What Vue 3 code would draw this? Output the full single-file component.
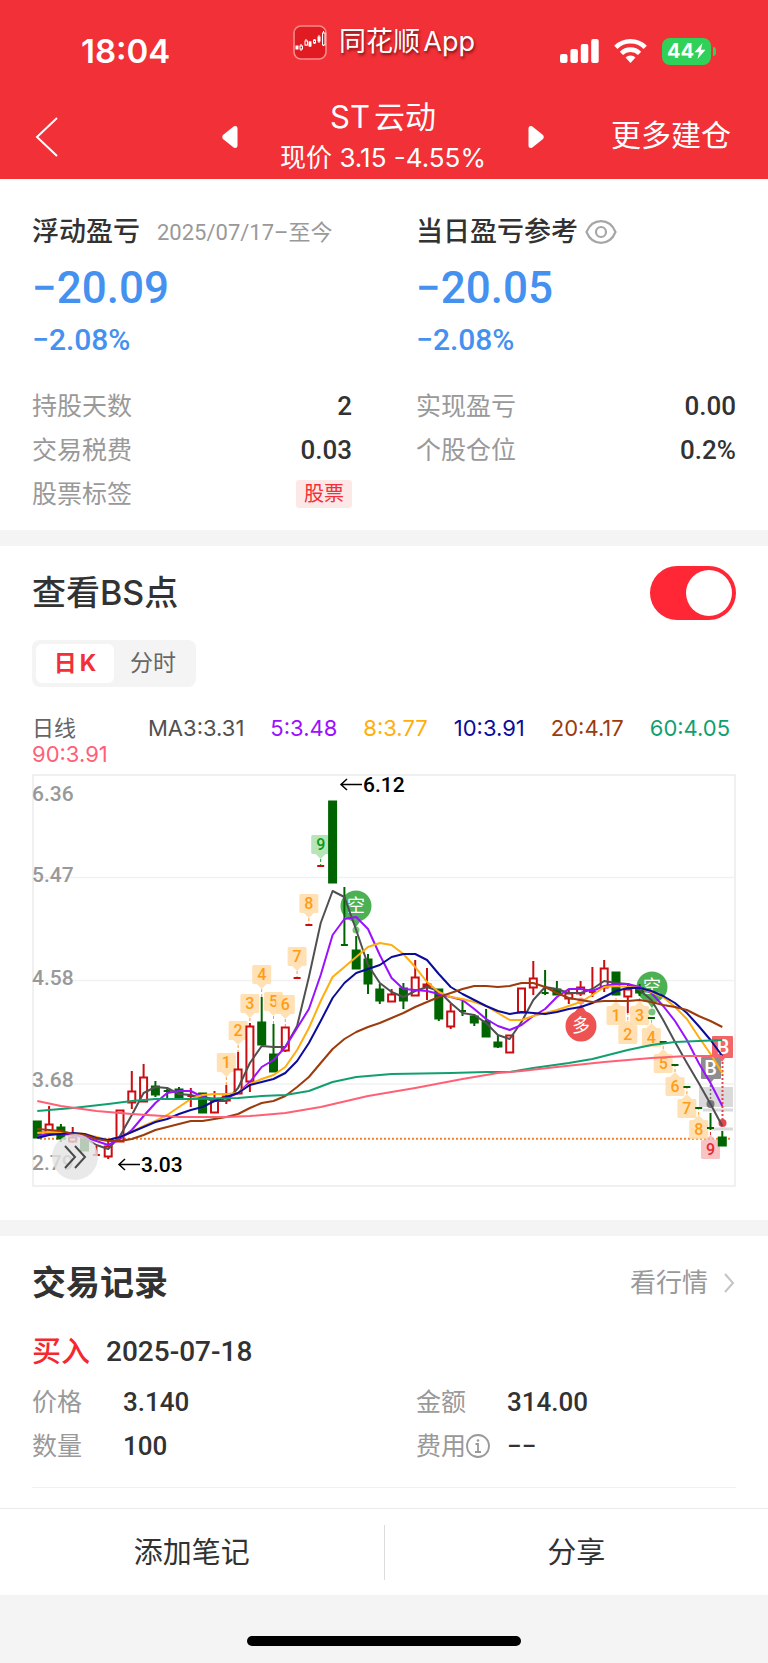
<script setup>
import { ref } from 'vue'

const bsVisible = ref(true)
const period = ref('day')

const summary = [
  {
    title: '浮动盈亏', range: '2025/07/17–至今', amount: '−20.09', percent: '−2.08%',
    rows: [
      { label: '持股天数', value: '2' },
      { label: '交易税费', value: '0.03' },
      { label: '股票标签', tag: '股票' }
    ]
  },
  {
    title: '当日盈亏参考', eye: true, amount: '−20.05', percent: '−2.08%',
    rows: [
      { label: '实现盈亏', value: '0.00' },
      { label: '个股仓位', value: '0.2%' }
    ]
  }
]

const legend = [
  { text: 'MA3:3.31', cls: 'ma3' },
  { text: '5:3.48', cls: 'ma5' },
  { text: '8:3.77', cls: 'ma8' },
  { text: '10:3.91', cls: 'ma10' },
  { text: '20:4.17', cls: 'ma20' },
  { text: '60:4.05', cls: 'ma60' },
  { text: '90:3.91', cls: 'ma90' }
]

const px = (i) => Math.round((37.3 + 11.81 * i) * 10) / 10

// colour, high, body top, body bottom, low
const candles = [
  ['g', 1121, 1121, 1138, 1138], ['r', 1106, 1124, 1134, 1136], ['g', 1124, 1127, 1139, 1142],
  ['r', 1127, 1137, 1142, 1143], ['g', 1139, 1139, 1151, 1151], ['r', 1146, 1155, 1155, 1155],
  ['r', 1140, 1146, 1157, 1159], ['r', 1110, 1110, 1142, 1142], ['r', 1071, 1091, 1103, 1109],
  ['r', 1064, 1077, 1102, 1102], ['g', 1081, 1086, 1095, 1097], ['g', 1088, 1091, 1091, 1099],
  ['g', 1087, 1089, 1098, 1098], ['r', 1088, 1096, 1096, 1107], ['g', 1093, 1093, 1113, 1113],
  ['r', 1091, 1100, 1113, 1113], ['r', 1085, 1096, 1101, 1104], ['r', 1052, 1069, 1094, 1094],
  ['r', 1023, 1026, 1082, 1092], ['g', 997, 1022, 1045, 1045], ['g', 1024, 1054, 1072, 1072],
  ['r', 1027, 1027, 1051, 1052], ['r', 978, 978, 978, 978], ['r', 925, 925, 925, 925],
  ['r', 866, 866, 866, 866], ['g', 801, 801, 883, 883], ['g', 887, 945, 945, 945],
  ['g', 936, 950, 969, 969], ['g', 954, 959, 984, 994], ['g', 984, 989, 1001, 1004],
  ['r', 989, 994, 1002, 1002], ['g', 983, 988, 1001, 1009], ['r', 960, 977, 996, 996],
  ['r', 968, 984, 987, 1000], ['g', 989, 989, 1019, 1021], ['r', 1004, 1011, 1027, 1029],
  ['g', 1001, 1011, 1011, 1016], ['g', 1014, 1016, 1023, 1026], ['g', 1009, 1021, 1037, 1037],
  ['g', 1035, 1042, 1047, 1048], ['r', 1035, 1035, 1053, 1053], ['r', 988, 988, 1013, 1013],
  ['r', 961, 978, 988, 995], ['g', 970, 993, 993, 995], ['g', 981, 989, 995, 995],
  ['r', 990, 993, 999, 1004], ['r', 981, 987, 994, 996], ['r', 967, 992, 992, 997],
  ['r', 960, 968, 988, 992], ['g', 972, 972, 995, 995], ['r', 985, 989, 997, 1013],
  ['g', 984, 988, 993, 996], ['g', 1018, 1018, 1018, 1018], ['g', 1042, 1042, 1042, 1042],
  ['g', 1065, 1065, 1065, 1065], ['g', 1087, 1087, 1087, 1087], ['g', 1108, 1108, 1108, 1108],
  ['g', 1113, 1128, 1128, 1130], ['g', 1131, 1137, 1146, 1146]
].map(([tone, high, top, bottom, low], i) => ({ tone, high, top, bottom, low, x: px(i) }))

const dense = (ys) => ys.map((y, i) => `${px(i)},${y}`).join(' ')
const sparse = (pairs) => pairs.map(([i, y]) => `${px(i)},${y}`).join(' ')

const averages = [
  { cls: 'ma3', points: dense([1132, 1133, 1133, 1134, 1138, 1145, 1149, 1136, 1115, 1093, 1087, 1088, 1094, 1095, 1098, 1101, 1101, 1088, 1063, 1046, 1047, 1047, 1026, 977, 923, 891, 897, 930, 965, 983, 992, 997, 991, 987, 991, 1003, 1013, 1015, 1023, 1035, 1039, 1022, 1000, 987, 989, 993, 993, 989, 981, 983, 984, 990, 1000, 1020, 1042, 1063, 1083, 1104, 1126]) },
  { cls: 'ma5', points: dense([1136, 1134, 1134, 1135, 1137, 1141, 1145, 1139, 1130, 1116, 1103, 1093, 1091, 1091, 1097, 1099, 1098, 1093, 1082, 1067, 1060, 1047, 1028, 1009, 975, 935, 919, 917, 929, 955, 978, 989, 990, 991, 994, 997, 1000, 1009, 1019, 1026, 1030, 1025, 1016, 1009, 997, 989, 989, 991, 986, 984, 984, 987, 993, 1006, 1021, 1040, 1063, 1083, 1106]) },
  { cls: 'ma8', points: dense([1133, 1132, 1132, 1133, 1134, 1137, 1140, 1137, 1132, 1126, 1121, 1115, 1107, 1099, 1095, 1094, 1094, 1093, 1084, 1079, 1075, 1067, 1050, 1028, 1001, 977, 967, 957, 947, 943, 945, 954, 967, 982, 992, 997, 999, 1002, 1006, 1013, 1020, 1020, 1016, 1013, 1010, 1006, 1002, 995, 987, 986, 987, 988, 992, 997, 1007, 1019, 1037, 1054, 1073]) },
  { cls: 'ma10', points: dense([1138, 1135, 1134, 1133, 1134, 1138, 1140, 1137, 1132, 1127, 1122, 1119, 1114, 1110, 1107, 1101, 1097, 1093, 1085, 1082, 1079, 1073, 1061, 1043, 1021, 998, 983, 973, 969, 965, 957, 954, 954, 960, 974, 987, 994, 1000, 1006, 1011, 1014, 1012, 1013, 1014, 1012, 1009, 1007, 1003, 997, 991, 988, 988, 991, 996, 1003, 1013, 1026, 1040, 1056]) },
  { cls: 'ma20', points: dense([1129, 1130, 1131, 1134, 1135, 1139, 1141, 1141, 1139, 1135, 1130, 1127, 1124, 1121, 1121, 1119, 1117, 1114, 1108, 1103, 1101, 1096, 1087, 1077, 1063, 1049, 1039, 1032, 1027, 1023, 1018, 1013, 1007, 1002, 997, 993, 989, 986, 986, 987, 986, 983, 983, 987, 993, 998, 1000, 1002, 1001, 1001, 1001, 1000, 1002, 1005, 1007, 1010, 1016, 1021, 1027]) },
  { cls: 'ma60', points: sparse([[0, 1111], [3, 1108], [6, 1104], [8, 1101], [10, 1099], [13, 1099], [17, 1098], [19, 1096], [21, 1095], [23, 1091], [25, 1082], [27, 1077], [30, 1074], [35, 1073], [38, 1072], [40, 1072], [42, 1068], [45, 1063], [47, 1059], [50, 1050], [52, 1045], [54, 1042], [56, 1041], [58, 1040]]) },
  { cls: 'ma90', points: sparse([[0, 1101], [2, 1106], [5, 1111], [8, 1114], [12, 1117], [16, 1117], [18, 1116], [21, 1113], [24, 1107], [28, 1096], [32, 1088], [36, 1079], [39, 1073], [41, 1071], [44, 1067], [48, 1062], [52, 1058], [55, 1056], [58, 1056]]) }
]

// candle index, digit, box top, other end of the leader, tone
const badges = [
  [16, 1, 1053, 1085], [17, 2, 1021, 1052], [18, 3, 994, 1025], [19, 4, 965, 997],
  [20, 5, 992, 1024], [21, 6, 995, 1027], [22, 7, 947, 977], [23, 8, 894, 924],
  [24, 9, 835, 865, 'green'],
  [49, 1, 1006, 995], [50, 2, 1025, 1013], [51, 3, 1006, 996], [52, 4, 1028, 1019],
  [53, 5, 1054, 1043], [54, 6, 1077, 1066], [55, 7, 1099, 1088], [56, 8, 1120, 1109],
  [57, 9, 1140, 1130, 'pink']
].map(([i, digit, top, end, tone = 'orange']) => {
  const x = px(i)
  const below = end > top
  const base = below ? top + 19 : top
  const tip = below ? base + 5 : base - 5
  return { x, digit, top, end, tone, tip, arrow: `${x - 5},${base} ${x + 5},${base} ${x},${tip}` }
})

const axis = [
  { text: '6.36', y: 801 }, { text: '5.47', y: 882 }, { text: '4.58', y: 985 },
  { text: '3.68', y: 1087 }, { text: '2.79', y: 1170 }
]
</script>

<template>
  <div class="page">
    <header class="top">
      <div class="status">
        <span class="clock">18:04</span>
        <span class="brand">
          <svg width="34" height="35" viewBox="0 0 34 35" aria-hidden="true">
            <rect x="1" y="1" width="32" height="33" rx="7" fill="#e01c22" stroke="#f68c8c" stroke-width="1.6" />
            <g fill="#fff" stroke="#fff" stroke-width="1">
              <rect x="3" y="21" width="2" height="3" />
              <path d="M8 19v7M13 14v7M17 16v6M21.500 14v5M26 10v8M30.500 6v15" />
              <rect x="7" y="21" width="2.500" height="3" fill="#e01c22" />
              <rect x="12" y="16" width="2.500" height="4" fill="#e01c22" />
              <rect x="16" y="17" width="2" height="4" />
              <rect x="20.500" y="15" width="2" height="3" fill="#e01c22" />
              <rect x="25" y="12" width="2" height="4" />
              <rect x="29.500" y="8" width="2.500" height="12" fill="#e01c22" />
            </g>
          </svg>
          <span>同花顺App</span>
        </span>
        <span class="indicators">
          <svg width="39" height="26" viewBox="0 0 39 26" fill="#fff" aria-label="信号">
            <rect x="0" y="16" width="7.500" height="9" rx="2" />
            <rect x="10.400" y="11" width="7.500" height="14" rx="2" />
            <rect x="20.800" y="6" width="7.500" height="19" rx="2" />
            <rect x="31.200" y="1" width="7.500" height="24" rx="2" />
          </svg>
          <svg width="33" height="26" viewBox="0 0 33 26" fill="none" stroke="#fff" stroke-width="4.600" aria-label="无线网络">
            <path d="M1.800 9.300a21 21 0 0 1 29.400 0" />
            <path d="M7.400 15.300a13 13 0 0 1 18.200 0" />
            <path d="M16.500 25l-5-5.400a7.300 7.300 0 0 1 10 0z" fill="#fff" stroke="none" />
          </svg>
          <span class="battery">
            <span>44</span>
            <svg width="12" height="18" viewBox="0 0 12 18" fill="#fff" aria-hidden="true"><path d="M8.500 1L.5 10.300h4.600L3.500 17l8-9.300H6.900z" /></svg>
          </span>
        </span>
      </div>
      <nav class="nav">
        <button class="back" type="button" aria-label="返回">
          <svg width="24" height="42" viewBox="0 0 24 42" fill="none" stroke="#fff" stroke-width="2"><path d="M22 2L2 21l20 19" /></svg>
        </button>
        <div class="stock">
          <button type="button" aria-label="上一只">
            <svg width="16" height="22" viewBox="0 0 16 22" fill="#fff"><path d="M15.500 2v18q0 2-2.500 2-1 0-2-1L1 13q-1.500-2 0-4L11 1q1-1 2-1 2.500 0 2.500 2z" /></svg>
          </button>
          <div class="quote">
            <h1>ST云动</h1>
            <p>现价 3.15 -4.55%</p>
          </div>
          <button type="button" aria-label="下一只">
            <svg width="16" height="22" viewBox="0 0 16 22" fill="#fff"><path d="M.5 2v18q0 2 2.500 2 1 0 2-1l10-8q1.500-2 0-4L5 1Q4 0 3 0 .5 0 .5 2z" /></svg>
          </button>
        </div>
        <a class="more" href="#">更多建仓</a>
      </nav>
    </header>

    <main>
      <section class="summary">
        <div v-for="col in summary" :key="col.title">
          <div class="heading">
            <h2>{{ col.title }}</h2>
            <span v-if="col.range" class="range">{{ col.range }}</span>
            <button v-if="col.eye" type="button" aria-label="显示或隐藏">
              <svg width="32" height="24" viewBox="0 0 32 24" fill="none" stroke="#a6a6a6" stroke-width="2.200">
                <path d="M1.500 12Q6 1.200 16 1.200T30.500 12Q26 22.800 16 22.800T1.500 12z" />
                <circle cx="16" cy="12" r="5" />
              </svg>
            </button>
          </div>
          <p class="amount">{{ col.amount }}</p>
          <p class="percent">{{ col.percent }}</p>
          <dl>
            <div v-for="row in col.rows" :key="row.label">
              <dt>{{ row.label }}</dt>
              <dd><span v-if="row.tag" class="tag">{{ row.tag }}</span><template v-else>{{ row.value }}</template></dd>
            </div>
          </dl>
        </div>
      </section>

      <section class="chart-section">
        <div class="bar">
          <label class="title" for="bs">查看BS点</label>
          <input id="bs" v-model="bsVisible" class="switch" type="checkbox" role="switch" />
        </div>
        <div class="tabs" role="tablist">
          <button type="button" role="tab" :class="{ active: period === 'day' }" :aria-selected="period === 'day'" @click="period = 'day'">日K</button>
          <button type="button" role="tab" :class="{ active: period === 'minute' }" :aria-selected="period === 'minute'" @click="period = 'minute'">分时</button>
        </div>
        <div class="legend">
          <span class="line-name">日线</span>
          <span v-for="item in legend" :key="item.text" :class="item.cls">{{ item.text }}</span>
        </div>
        <div class="chart">
          <svg viewBox="32 774 704 413" role="img" aria-label="日K线图">
            <rect x="33" y="775" width="702" height="411" fill="#fff" stroke="#ebebeb" stroke-width="1.500" />
            <path d="M33 877.500H735M33 980.500H735M33 1084H735" stroke="#f1f1f1" stroke-width="1.500" />
            <g class="axis">
              <text v-for="a in axis" :key="a.text" x="32" :y="a.y">{{ a.text }}</text>
            </g>
            <path d="M40 1138.700H732" stroke="#f5812a" stroke-width="2" stroke-dasharray="2 2" />
            <rect x="699" y="1087" width="34" height="20" fill="#dadada" />
            <path d="M703 1110H733M712 1129H733" stroke="#dadada" stroke-width="3" />

            <g v-for="b in badges" :key="b.x" :class="['badge', b.tone]">
              <line :x1="b.x" :x2="b.x" :y1="b.tip" :y2="b.end" />
              <rect :x="b.x - 9.5" :y="b.top" width="19" height="19" rx="1.500" />
              <polygon :points="b.arrow" />
              <text :x="b.x" :y="b.top + 15">{{ b.digit }}</text>
            </g>

            <g class="signal">
              <path d="M350 919h12l-6 8z" fill="#4cb152" />
              <circle cx="356" cy="906" r="15.500" fill="#4cb152" />
              <circle cx="356" cy="930" r="3.500" fill="#4cb152" opacity=".75" />
              <text x="356" y="912">空</text>
              <path d="M646 1000h12l-6 8z" fill="#4cb152" />
              <circle cx="652" cy="987" r="15.500" fill="#4cb152" />
              <circle cx="652" cy="1012" r="3.500" fill="#4cb152" opacity=".75" />
              <text x="652" y="993">空</text>
              <path d="M574 1013h13l-6-9z" fill="#ee5353" />
              <circle cx="581" cy="1026" r="15.500" fill="#ee5353" />
              <circle cx="581" cy="1001" r="3.500" fill="#ee5353" opacity=".6" />
              <text x="581" y="1032">多</text>
            </g>

            <g v-for="c in candles" :key="c.x" :class="c.tone">
              <path :d="`M${c.x} ${c.high}V${c.top}M${c.x} ${c.bottom}V${c.low}`" />
              <path v-if="c.top === c.bottom" :d="`M${c.x - 3.5} ${c.top}h7`" />
              <rect v-else :x="c.x - 3.5" :y="c.top + 0.5" width="7" :height="c.bottom - c.top - 1" />
            </g>

            <template v-if="bsVisible">
              <path d="M702 1057h18q1 0 1 1v20q0 1-1 1h-6l-3.500 4-3.500-4h-5q-1 0-1-1v-20q0-1 1-1z" fill="#8e8e8e" />
              <path d="M710.500 1085V1101" stroke="#777" stroke-width="1.500" stroke-dasharray="2 2" />
              <circle cx="710.500" cy="1104" r="4" fill="#777" />
              <path d="M713 1036h19q1 0 1 1v20q0 1-1 1h-7l-3 4-3-4h-6q-1 0-1-1v-20q0-1 1-1z" fill="#f2666a" />
              <path d="M722.500 1062V1120" stroke="#e9444b" stroke-width="2" stroke-dasharray="2 2" />
              <circle cx="722.500" cy="1123" r="4" fill="#e9444b" />
              <g class="point"><text x="710.500" y="1075">B</text><text x="723" y="1054">B</text></g>
            </template>

            <g class="averages">
              <polyline v-for="m in averages" :key="m.cls" :class="m.cls" :points="m.points" />
            </g>

            <g class="extreme">
              <path d="M362 784.500H341.500M347 779l-6 5.500 6 5.500" />
              <text x="363" y="792">6.12</text>
              <path d="M140 1164.500H119.500M125 1159l-6 5.500 6 5.500" />
              <text x="141" y="1172">3.03</text>
            </g>
          </svg>
          <button class="expand" type="button" aria-label="展开">
            <svg width="24" height="26" viewBox="0 0 24 26" fill="none" stroke="#4a4a4a" stroke-width="2"><path d="M2 2l10 11L2 24M12 2l10 11-10 11" /></svg>
          </button>
        </div>
      </section>

      <section class="records">
        <div class="bar">
          <h2 class="title strong">交易记录</h2>
          <a href="#">看行情
            <svg width="12" height="20" viewBox="0 0 12 20" fill="none" stroke="#c4c4c4" stroke-width="2"><path d="M1 1l8 9-8 9" /></svg>
          </a>
        </div>
        <div class="trade"><span class="buy">买入</span><time datetime="2025-07-18">2025-07-18</time></div>
        <dl>
          <div><dt>价格</dt><dd>3.140</dd></div>
          <div><dt>金额</dt><dd>314.00</dd></div>
          <div><dt>数量</dt><dd>100</dd></div>
          <div>
            <dt>费用<svg width="24" height="24" viewBox="0 0 24 24" fill="none" stroke="#999" stroke-width="1.800" aria-hidden="true"><circle cx="12" cy="12" r="11" /><path d="M9.500 10H12v8M9 18h6" /><circle cx="12" cy="6.500" r="1.300" fill="#999" stroke="none" /></svg></dt>
            <dd>−−</dd>
          </div>
        </dl>
      </section>
    </main>

    <footer>
      <div class="actions">
        <button type="button">添加笔记</button>
        <button type="button">分享</button>
      </div>
      <div class="home"><span></span></div>
    </footer>
  </div>
</template>

<style>
body { margin: 0; background: #f4f4f4; }
</style>

<style scoped>
.page {
  --num: Roboto, "Noto Sans CJK SC", sans-serif;
  background: #fff;
  color: #323232;
  font-family: Inter, "Noto Sans CJK SC", sans-serif;
}
h1, h2, p, dl, dd { margin: 0; font-weight: 400; }
button { padding: 0; border: 0; background: none; color: inherit; font: inherit; cursor: pointer; }
a { color: inherit; text-decoration: none; }
svg { display: block; }

.top { background: #f23037; color: #fff; text-autospace: normal; }
.status {
  box-sizing: border-box;
  height: 94px;
  padding: 8px 52px 0;
  display: grid;
  grid-template-columns: 1fr auto 1fr;
  align-items: center;
}
.clock { padding-left: 29px; font-size: 33px; font-weight: 600; }
.brand {
  margin-bottom: 18px;
  display: flex;
  align-items: center;
  gap: 12px;
  font-size: 27px;
  line-height: 36px;
  text-shadow: 1px 2px 3px rgba(70, 0, 0, .7);
}
.indicators { display: flex; align-items: center; justify-content: flex-end; gap: 15px; }
.battery {
  position: relative;
  box-sizing: border-box;
  width: 49px;
  height: 27px;
  margin-right: 5px;
  display: flex;
  align-items: center;
  justify-content: center;
  border-radius: 8px;
  background: #30d158;
  font-size: 20px;
  font-weight: 700;
}
.battery::after {
  content: "";
  position: absolute;
  right: -5px;
  top: 9px;
  width: 3px;
  height: 9px;
  border-radius: 0 3px 3px 0;
  background: #30d158;
}
.nav {
  height: 85px;
  padding: 0 37px 0 35px;
  display: grid;
  grid-template-columns: 1fr auto 1fr;
  align-items: center;
}
.back { justify-self: start; }
.stock { display: flex; align-items: center; gap: 42px; }
.quote { text-align: center; }
.quote h1 { font-size: 31px; line-height: 41px; }
.quote p { font-size: 26px; line-height: 41px; }
.more { justify-self: end; padding-bottom: 4px; font-size: 30px; line-height: 40px; }

.summary {
  padding: 35px 32px 14px;
  display: grid;
  grid-template-columns: 1fr 1fr;
  gap: 64px;
}
.heading { height: 36px; display: flex; align-items: center; white-space: nowrap; }
.heading h2 { font-size: 27px; font-weight: 500; line-height: 36px; }
.heading button { margin-left: 7px; }
.range { margin-left: 17px; padding-bottom: 4px; color: #999; font-family: var(--num); font-size: 22px; }
.amount, .percent { color: #4591ef; font-family: var(--num); font-weight: 500; }
.amount { margin-top: 12px; font-size: 44px; line-height: 52px; }
.percent { margin-top: 8px; font-size: 30px; line-height: 36px; }
.summary dl { margin-top: 26px; }
.summary dl div { height: 44px; display: flex; align-items: center; justify-content: space-between; }
dt { color: #999; font-size: 25px; line-height: 44px; }
dd { font-family: var(--num); font-size: 26px; font-weight: 500; line-height: 44px; }
.tag {
  display: block;
  padding: 0 8px;
  border-radius: 3px;
  background: #fde8e8;
  color: #f23037;
  font-size: 20px;
  font-weight: 400;
  line-height: 28px;
}

.chart-section { padding: 20px 32px 33px; border: solid #f4f4f4; border-width: 16px 0; }
.bar { display: flex; align-items: center; justify-content: space-between; }
.title { font-size: 34px; font-weight: 500; line-height: 44px; }
.switch {
  appearance: none;
  box-sizing: border-box;
  width: 86px;
  height: 54px;
  margin: 0;
  padding: 4px;
  display: flex;
  border-radius: 27px;
  background: #ddd;
  cursor: pointer;
}
.switch::before { content: ""; width: 46px; height: 46px; border-radius: 50%; background: #fff; }
.switch:checked { justify-content: flex-end; background: #ff2635; }
.tabs {
  box-sizing: border-box;
  width: fit-content;
  height: 47px;
  margin-top: 20px;
  padding: 4px;
  display: flex;
  border-radius: 8px;
  background: #f4f4f4;
}
.tabs button { width: 78px; border-radius: 6px; color: #666; font-size: 23px; line-height: 39px; text-autospace: normal; }
.tabs .active { background: #fff; color: #f23037; font-weight: 700; }
.legend {
  margin-top: 28px;
  display: flex;
  flex-wrap: wrap;
  column-gap: 26px;
  font-size: 22px;
  line-height: 26px;
}
.line-name { width: 90px; color: #666; }
.ma3 { color: #505050; }
.ma5 { color: #9a10ff; }
.ma8 { color: #ffae0d; }
.ma10 { color: #0c0c9a; }
.ma20 { color: #9c3b0c; }
.ma60 { color: #129f70; }
.ma90 { color: #ff6076; }

.chart { position: relative; margin-top: 7px; }
.chart > svg { width: 100%; height: auto; }
.chart text { font-family: var(--num); }
.axis { fill: #999; font-size: 21px; font-weight: 500; }
.averages { fill: none; stroke-width: 2; stroke-linejoin: round; }
.averages polyline { stroke: currentColor; }
.r { fill: #fff; stroke: #cb0d12; stroke-width: 2; }
.g { fill: #006500; stroke: #006500; stroke-width: 2; }
.badge rect, .badge polygon { fill: #ffd9a3; fill-opacity: .8; }
.badge line { stroke: #f79d32; stroke-width: 1; stroke-dasharray: 3 2; }
.badge text { fill: #ff9c16; font-size: 16px; font-weight: 500; text-anchor: middle; }
.badge.green rect, .badge.green polygon { fill: #a6dda8; }
.badge.green text { fill: #0a9b10; }
.badge.green line { stroke: #0a9b10; }
.badge.pink rect, .badge.pink polygon { fill: #f8b4b6; }
.badge.pink text { fill: #e62b34; }
.badge.pink line { stroke: #e62b34; }
.signal text { fill: #fff; font-size: 18px; text-anchor: middle; }
.point text { fill: #fff; font-size: 20px; font-weight: 500; text-anchor: middle; }
.extreme path { fill: none; stroke: #000; stroke-width: 1.5; }
.extreme text { fill: #000; font-size: 21px; font-weight: 500; }
.expand {
  position: absolute;
  left: 20px;
  bottom: 7px;
  width: 46px;
  height: 46px;
  display: grid;
  place-items: center;
  border-radius: 50%;
  background: rgba(228, 228, 228, .8);
}

.records { margin: 0 32px; padding: 25px 0 19px; border-bottom: 1px solid #f0f0f0; }
.strong { font-weight: 700; }
.records a { display: flex; align-items: center; gap: 16px; color: #999; font-size: 26px; line-height: 36px; }
.trade { margin-top: 25px; display: flex; align-items: center; gap: 16px; line-height: 44px; }
.buy { color: #f5282f; font-size: 29px; font-weight: 500; }
.trade time { font-family: var(--num); font-size: 28px; font-weight: 500; }
.records dl { margin-top: 6px; display: grid; grid-template-columns: 1fr 1fr; column-gap: 64px; }
.records dl div { display: flex; }
.records dt { width: 91px; display: flex; align-items: center; }

.actions { height: 86px; margin-top: 20px; display: flex; align-items: center; border-top: 1px solid #ebebeb; }
.actions button { flex: 1; height: 55px; padding-bottom: 4px; font-size: 29px; }
.actions button + button { border-left: 1px solid #dcdcdc; }
.home { height: 51px; padding-bottom: 17px; display: flex; align-items: flex-end; justify-content: center; background: #f4f4f4; }
.home span { width: 274px; height: 10px; border-radius: 5px; background: #000; }
</style>
